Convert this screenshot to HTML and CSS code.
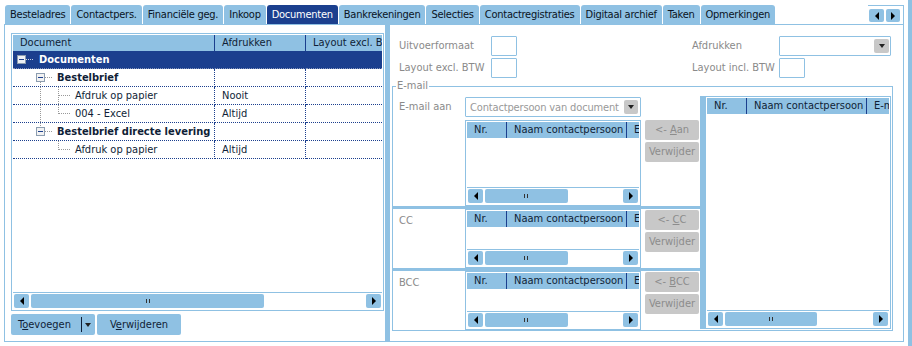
FILE: index.html
```html
<!DOCTYPE html>
<html lang="nl">
<head>
  <meta charset="UTF-8">
  <title>Documenten</title>
  <link rel="stylesheet" href="styles.css">
</head>
<body>

<div class="screen">
  <div class="main">

    <div class="tabbar">
      <div class="tab">Besteladres</div>
      <div class="tab">Contactpers.</div>
      <div class="tab">Financiële geg.</div>
      <div class="tab">Inkoop</div>
      <div class="tab active">Documenten</div>
      <div class="tab">Bankrekeningen</div>
      <div class="tab">Selecties</div>
      <div class="tab">Contactregistraties</div>
      <div class="tab">Digitaal archief</div>
      <div class="tab">Taken</div>
      <div class="tab">Opmerkingen</div>
      <div class="tab-scroll">
        <span class="sbtn"><i class="arr-l"></i></span>
        <span class="sbtn narrow"><i class="arr-r"></i></span>
      </div>
    </div>

    <div class="panel">

      <!-- documenten boom -->
      <div class="left">
        <div class="tree-grid">
          <div class="grid-head">
            <div class="gh c1">Document</div>
            <div class="gh c2">Afdrukken</div>
            <div class="gh c3">Layout excl. BTW</div>
          </div>
          <div class="grid-body">
            <div class="trow sel">
              <div class="c1">
                <svg class="gut" width="26" height="17">
                  <rect x="4.5" y="4.5" width="8" height="8" fill="#eef1f5" stroke="#8c9db0"/>
                  <line x1="6" y1="8.5" x2="11" y2="8.5" stroke="#1b3f8e"/>
                  <line x1="13" y1="8.5" x2="20" y2="8.5" stroke="#c8d2e2" stroke-dasharray="1 1"/>
                </svg><b>Documenten</b>
              </div>
              <div class="c2"></div>
              <div class="c3"></div>
            </div>
            <div class="trow">
              <div class="c1">
                <svg class="gut" width="44" height="17">
                  <rect x="23.5" y="4.5" width="8" height="8" fill="#f2f2f2" stroke="#8c9db0"/>
                  <line x1="25" y1="8.5" x2="30" y2="8.5" stroke="#1b3f8e"/>
                  <line x1="32" y1="8.5" x2="39" y2="8.5" stroke="#999" stroke-dasharray="1 1"/>
                  <line x1="27.5" y1="13" x2="27.5" y2="17" stroke="#999" stroke-dasharray="1 1"/>
                </svg><b>Bestelbrief</b>
              </div>
              <div class="c2"></div>
              <div class="c3"></div>
            </div>
            <div class="trow">
              <div class="c1">
                <svg class="gut" width="62" height="17">
                  <line x1="27.5" y1="0" x2="27.5" y2="17" stroke="#999" stroke-dasharray="1 1"/>
                  <line x1="45.5" y1="0" x2="45.5" y2="17" stroke="#999" stroke-dasharray="1 1"/>
                  <line x1="46" y1="8.5" x2="58" y2="8.5" stroke="#999" stroke-dasharray="1 1"/>
                </svg>Afdruk op papier
              </div>
              <div class="c2">Nooit</div>
              <div class="c3"></div>
            </div>
            <div class="trow">
              <div class="c1">
                <svg class="gut" width="62" height="17">
                  <line x1="27.5" y1="0" x2="27.5" y2="17" stroke="#999" stroke-dasharray="1 1"/>
                  <line x1="45.5" y1="0" x2="45.5" y2="9" stroke="#999" stroke-dasharray="1 1"/>
                  <line x1="46" y1="8.5" x2="58" y2="8.5" stroke="#999" stroke-dasharray="1 1"/>
                </svg>004 - Excel
              </div>
              <div class="c2">Altijd</div>
              <div class="c3"></div>
            </div>
            <div class="trow">
              <div class="c1">
                <svg class="gut" width="44" height="17">
                  <line x1="27.5" y1="0" x2="27.5" y2="4" stroke="#999" stroke-dasharray="1 1"/>
                  <rect x="23.5" y="4.5" width="8" height="8" fill="#f2f2f2" stroke="#8c9db0"/>
                  <line x1="25" y1="8.5" x2="30" y2="8.5" stroke="#1b3f8e"/>
                  <line x1="32" y1="8.5" x2="39" y2="8.5" stroke="#999" stroke-dasharray="1 1"/>
                </svg><b>Bestelbrief directe levering</b>
              </div>
              <div class="c2"></div>
              <div class="c3"></div>
            </div>
            <div class="trow">
              <div class="c1">
                <svg class="gut" width="62" height="17">
                  <line x1="45.5" y1="0" x2="45.5" y2="9" stroke="#999" stroke-dasharray="1 1"/>
                  <line x1="46" y1="8.5" x2="58" y2="8.5" stroke="#999" stroke-dasharray="1 1"/>
                </svg>Afdruk op papier
              </div>
              <div class="c2">Altijd</div>
              <div class="c3"></div>
            </div>
          </div>
          <div class="hscroll">
            <span class="sbtn"><i class="arr-l"></i></span>
            <div class="track"><div class="thumb" style="width: 70%"><i class="grip"></i></div></div>
            <span class="sbtn"><i class="arr-r"></i></span>
          </div>
        </div>

        <div class="actions">
          <div class="btn split">
            <span class="btn-text">T<u>o</u>evoegen</span>
            <span class="btn-drop"><i class="arr-d"></i></span>
          </div>
          <div class="btn">V<u>e</u>rwijderen</div>
        </div>
      </div>

      <div class="splitter"></div>

      <!-- instellingen -->
      <div class="right">
        <div class="fields">
          <div class="lbl">Uitvoerformaat</div>
          <div class="input"></div>
          <div></div>
          <div class="lbl">Afdrukken</div>
          <div class="combo"><span class="drop"><i class="arr-d"></i></span></div>

          <div class="lbl">Layout excl. BTW</div>
          <div class="input"></div>
          <div></div>
          <div class="lbl">Layout incl. BTW</div>
          <div class="input"></div>
        </div>

        <div class="group">
          <span class="group-label">E-mail</span>

          <div class="recips">
            <div class="rsec first">
              <div class="rlabel">E-mail aan</div>
              <div class="rmid">
                <div class="combo email"><span class="combo-text">Contactpersoon van document</span><span class="drop"><i class="arr-d"></i></span></div>
                <div class="cgrid tall">
                  <div class="grid-head">
                    <div class="gh nr">Nr.</div>
                    <div class="gh naam">Naam contactpersoon</div>
                    <div class="gh rest">E-mail</div>
                  </div>
                  <div class="grid-body"></div>
                  <div class="hscroll">
                    <span class="sbtn"><i class="arr-l"></i></span>
                    <div class="track"><div class="thumb" style="width: 61%"><i class="grip"></i></div></div>
                    <span class="sbtn"><i class="arr-r"></i></span>
                  </div>
                </div>
              </div>
              <div class="rbtns">
                <div class="gbtn">&lt;- <u>A</u>an</div>
                <div class="gbtn">Verwijder</div>
              </div>
            </div>

            <div class="hbar"></div>

            <div class="rsec">
              <div class="rlabel">CC</div>
              <div class="rmid">
                <div class="cgrid">
                  <div class="grid-head">
                    <div class="gh nr">Nr.</div>
                    <div class="gh naam">Naam contactpersoon</div>
                    <div class="gh rest">E-mail</div>
                  </div>
                  <div class="grid-body"></div>
                  <div class="hscroll">
                    <span class="sbtn"><i class="arr-l"></i></span>
                    <div class="track"><div class="thumb" style="width: 61%"><i class="grip"></i></div></div>
                    <span class="sbtn"><i class="arr-r"></i></span>
                  </div>
                </div>
              </div>
              <div class="rbtns">
                <div class="gbtn">&lt;- <u>C</u>C</div>
                <div class="gbtn">Verwijder</div>
              </div>
            </div>

            <div class="hbar"></div>

            <div class="rsec">
              <div class="rlabel">BCC</div>
              <div class="rmid">
                <div class="cgrid">
                  <div class="grid-head">
                    <div class="gh nr">Nr.</div>
                    <div class="gh naam">Naam contactpersoon</div>
                    <div class="gh rest">E-mail</div>
                  </div>
                  <div class="grid-body"></div>
                  <div class="hscroll">
                    <span class="sbtn"><i class="arr-l"></i></span>
                    <div class="track"><div class="thumb" style="width: 61%"><i class="grip"></i></div></div>
                    <span class="sbtn"><i class="arr-r"></i></span>
                  </div>
                </div>
              </div>
              <div class="rbtns">
                <div class="gbtn">&lt;- <u>B</u>CC</div>
                <div class="gbtn">Verwijder</div>
              </div>
            </div>
          </div>

          <div class="vbar"></div>

          <div class="cgrid big">
            <div class="grid-head">
              <div class="gh nr">Nr.</div>
              <div class="gh naam">Naam contactpersoon</div>
              <div class="gh rest">E-mail</div>
            </div>
            <div class="grid-body"></div>
            <div class="hscroll">
              <span class="sbtn"><i class="arr-l"></i></span>
              <div class="track"><div class="thumb" style="width: 63%"><i class="grip"></i></div></div>
              <span class="sbtn"><i class="arr-r"></i></span>
            </div>
          </div>
        </div>
      </div>

    </div>
  </div>
  <div class="edge"></div>
</div>

</body>
</html>
```

FILE: styles.css
```css
* {
  box-sizing: border-box;
}
body {
  margin: 0;
  background-color: #fff;
  font-family: "DejaVu Sans Condensed", "DejaVu Sans", sans-serif;
  font-size: 11px;
  color: #0f1e36;
}
.screen {
  display: flex;
  width: 912px;
  height: 346px;
  overflow: hidden;
}
.main {
  width: 908px;
  padding-top: 5px;
}
.edge {
  width: 4px;
  background-color: #8fc1e3;
}

/* tabs */
.tabbar {
  display: flex;
  width: 900px;
  height: 19px;
  margin-left: 4px;
  padding-left: 1px;
}
.tab {
  background-color: #8fc1e3;
  border-radius: 3px 3px 0 0;
  margin-right: 1px;
  padding: 0 5px;
  line-height: 19px;
  letter-spacing: -0.25px;
  white-space: nowrap;
  color: #0a1424;
}
.tab.active {
  background-color: #1b3f8e;
  color: white;
}
.tab-scroll {
  display: flex;
  gap: 2px;
  margin-left: auto;
  width: 36px;
  padding: 3px 3px 0 1px;
  border-top: 1px solid #8fc1e3;
  border-right: 1px solid #8fc1e3;
}
.tab-scroll .sbtn {
  height: 13px;
}
.tab-scroll .sbtn.narrow {
  width: 14px;
}

/* small parts */
.sbtn {
  display: flex;
  align-items: center;
  justify-content: center;
  width: 15px;
  background-color: #8fc1e3;
  border-radius: 2px;
  flex-shrink: 0;
}
.arr-l {
  width: 0;
  height: 0;
  border-top: 4px solid transparent;
  border-bottom: 4px solid transparent;
  border-right: 4px solid #000;
}
.arr-r {
  width: 0;
  height: 0;
  border-top: 4px solid transparent;
  border-bottom: 4px solid transparent;
  border-left: 4px solid #000;
}
.arr-d {
  width: 0;
  height: 0;
  border-left: 3px solid transparent;
  border-right: 3px solid transparent;
  border-top: 4px solid #222;
}

/* panel */
.panel {
  display: flex;
  width: 900px;
  height: 318px;
  margin-left: 4px;
  border: 1px solid #8fc1e3;
}
.left {
  width: 380px;
  padding: 8px 0 0 6px;
}
.splitter {
  width: 5px;
  background-color: #8fc1e3;
}
.right {
  flex: 1;
}

/* grids */
.tree-grid, .cgrid {
  display: flex;
  flex-direction: column;
  border: 1px solid #8fc1e3;
  padding: 1px;
  overflow: hidden;
}
.tree-grid {
  width: 373px;
  height: 278px;
}
.grid-head {
  display: flex;
  height: 16px;
  flex-shrink: 0;
  background-color: #8fc1e3;
}
.gh {
  line-height: 16px;
  padding-left: 7px;
  border-right: 1px solid #1b3f8e;
  white-space: nowrap;
  overflow: hidden;
}
.gh.c3, .gh.rest {
  border-right: none;
  flex: 1;
}
.c1 {
  width: 202px;
  flex-shrink: 0;
}
.c2 {
  width: 91px;
  flex-shrink: 0;
}
.c3 {
  flex: 1;
}
.grid-body {
  flex: 1;
}
.trow {
  display: flex;
  height: 18px;
}
.trow > div {
  display: flex;
  align-items: center;
  height: 18px;
  border-bottom: 1px dotted #1b3f8e;
  border-right: 1px dotted #1b3f8e;
  white-space: nowrap;
}
.trow > .c2 {
  padding-left: 7px;
}
.trow > .c3 {
  border-right: none;
}
.trow.sel > div {
  background-color: #1b3f8e;
  color: white;
  border-bottom-color: #8797bd;
}
.gut {
  flex-shrink: 0;
  display: block;
  shape-rendering: crispEdges;
}

.hscroll {
  display: flex;
  gap: 2px;
  height: 17px;
  flex-shrink: 0;
  border-top: 1px solid #8fc1e3;
  padding: 1px;
}
.track {
  flex: 1;
}
.thumb {
  display: flex;
  align-items: center;
  justify-content: center;
  height: 100%;
  background-color: #8fc1e3;
  border-radius: 2px;
}
.grip {
  width: 4px;
  height: 4px;
  border-left: 1px solid #333;
  border-right: 1px solid #333;
}

/* buttons */
.actions {
  display: flex;
  gap: 2px;
  margin-top: 3px;
}
.btn {
  width: 84px;
  height: 21px;
  line-height: 21px;
  background-color: #8fc1e3;
  border-radius: 2px;
  text-align: center;
}
.btn.split {
  display: flex;
  align-items: center;
  text-align: left;
}
.btn-text {
  flex: 1;
  padding-left: 7px;
}
.btn-drop {
  display: flex;
  align-items: center;
  justify-content: center;
  width: 13px;
  height: 15px;
  margin-right: 1px;
  border-left: 1px solid #0f1e36;
}

/* top fields */
.fields {
  display: grid;
  grid-template-columns: 92px 26px 175px 87px 112px;
  grid-template-rows: 20px 20px;
  row-gap: 2px;
  padding: 11px 0 0 9px;
}
.lbl {
  line-height: 20px;
  color: #8a8a8a;
  white-space: nowrap;
}
.input {
  width: 26px;
  border: 1px solid #8fc1e3;
  border-radius: 1px;
}
.combo {
  display: flex;
  align-items: center;
  border: 1px solid #8fc1e3;
  border-radius: 1px;
  padding: 0 1px 0 4px;
  color: #999;
  white-space: nowrap;
}
.combo-text {
  letter-spacing: -0.15px;
}
.drop {
  display: flex;
  align-items: center;
  justify-content: center;
  width: 15px;
  height: 14px;
  margin-left: auto;
  background-color: #c8c8c8;
  border-radius: 2px;
}
.combo.email {
  height: 20px;
  padding-right: 2px;
}
.combo.email .drop {
  width: 14px;
}

/* e-mail groep */
.group {
  position: relative;
  display: flex;
  width: 501px;
  height: 245px;
  margin: 8px 0 0 2px;
  padding-right: 1px;
  border: 1px solid #8fc1e3;
}
.group-label {
  position: absolute;
  top: -8px;
  left: 3px;
  padding: 0 1px;
  line-height: 13px;
  background-color: #fff;
  color: #8a8a8a;
}
.recips {
  display: flex;
  flex-direction: column;
  width: 307px;
}
.rsec {
  display: flex;
  height: 59px;
  padding-left: 6px;
}
.rsec.first {
  height: 119px;
  padding-top: 10px;
}
.rlabel {
  width: 66px;
  line-height: 20px;
  margin-top: 2px;
  color: #8a8a8a;
}
.rsec.first .rlabel {
  margin-top: 0;
}
.rmid {
  width: 176px;
  margin-right: 4px;
}
.rmid .combo {
  margin-bottom: 3px;
}
.cgrid {
  width: 176px;
  height: 59px;
}
.cgrid.tall {
  height: 86px;
}
.cgrid.big {
  width: 186px;
  height: 233px;
  margin: 9px 0 1px;
}
.gh.nr {
  width: 40px;
  flex-shrink: 0;
}
.gh.naam {
  width: 120px;
  flex-shrink: 0;
}
.rbtns {
  display: flex;
  flex-direction: column;
  gap: 2px;
  width: 54px;
  margin-top: 1px;
}
.rsec.first .rbtns {
  margin-top: 23px;
}
.gbtn {
  height: 20px;
  line-height: 20px;
  background-color: #c8c8c8;
  color: #8c8c8c;
  border-radius: 2px;
  text-align: center;
  white-space: nowrap;
}
.hbar {
  height: 3px;
  background-color: #8fc1e3;
}
.vbar {
  width: 5px;
  margin: 9px 0 1px;
  background-color: #8fc1e3;
}
```
